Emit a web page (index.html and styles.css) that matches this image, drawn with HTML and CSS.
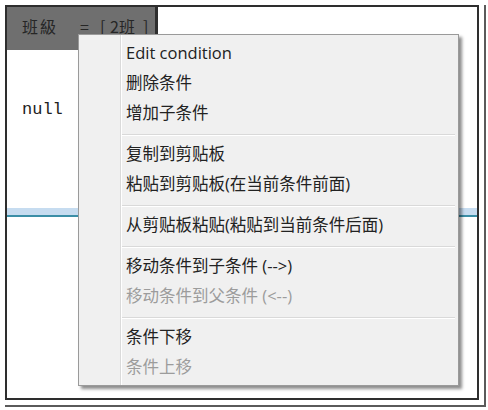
FILE: index.html
```html
<!DOCTYPE html>
<html>

<head>
    <link rel="stylesheet" href="styles.css">
</head>

<body>
    <div class="photo">
        <div class="frame">
            <div class="head">
                <span class="fld">班級</span>
                <span class="op">=</span>
                <span class="br">[</span>
                <span class="val">2班</span>
                <span class="br">]</span>
            </div>
            <div class="null">null</div>
            <div class="band"></div>

            <div class="menu">
                <div class="item">Edit condition</div>
                <div class="item">删除条件</div>
                <div class="item">增加子条件</div>
                <div class="sep"></div>
                <div class="item">复制到剪贴板</div>
                <div class="item">粘贴到剪贴板(在当前条件前面)</div>
                <div class="sep"></div>
                <div class="item">从剪贴板粘贴(粘贴到当前条件后面)</div>
                <div class="sep"></div>
                <div class="item">移动条件到子条件 (--&gt;)</div>
                <div class="item off">移动条件到父条件 (&lt;--)</div>
                <div class="sep"></div>
                <div class="item">条件下移</div>
                <div class="item off">条件上移</div>
            </div>
        </div>
    </div>
</body>

</html>
```

FILE: styles.css
```css
* {
    margin: 0;
    padding: 0;
    box-sizing: border-box;
}

body {
    background-color: #fff;
    font-family: "Open Sans", "Noto Sans CJK SC", sans-serif;
}

.photo {
    width: 481px;
    margin: 5px 0 0 5px;
    padding: 0 5px 5px 0;
    border-right: 2px solid #5a5a5a;
    border-bottom: 2px solid #5a5a5a;
}

.frame {
    position: relative;
    width: 474px;
    height: 395px;
    border: 2px solid #2e2e2e;
    background-color: #fff;
}

.head {
    display: flex;
    align-items: center;
    width: 151px;
    height: 43px;
    padding: 0 0 6px 15px;
    background-color: #6f6f6f;
    border-right: 3px solid #2e2e2e;
    color: #262626;
    font-family: "Noto Sans CJK SC", sans-serif;
    font-size: 16px;
    white-space: nowrap;
}

.head span {
    flex-shrink: 0;
}

.head .fld {
    width: 58px;
    letter-spacing: 2px;
}

.head .op {
    width: 20px;
}

.head .br {
    width: 10px;
}

.head .val {
    width: 33px;
}

.null {
    margin-top: 50px;
    padding-left: 15px;
    line-height: 20px;
    font-family: "Liberation Mono", monospace;
    font-size: 17px;
    color: #222;
}

.band {
    margin-top: 88px;
    height: 9px;
    background-color: #c6dcf0;
    border-bottom: 2px solid #3b8ea6;
}

.menu {
    position: absolute;
    left: 71px;
    top: 27px;
    width: 381px;
    height: 352px;
    padding: 3px 0 5px;
    border: 1px solid #9a9a9a;
    background: linear-gradient(to right, transparent 41px, #dadada 41px, #dadada 42px, #fff 42px, #fff 43px, transparent 43px), #f0f0f0;
    box-shadow: 3px 3px 3px rgba(0, 0, 0, 0.45);
}

.item {
    height: 30px;
    line-height: 30px;
    padding-left: 47px;
    font-size: 16.5px;
    color: #222;
    white-space: nowrap;
}

.item.off {
    color: #9c9c9c;
}

.sep {
    height: 2px;
    margin: 6px 3px 3px 43px;
    border-top: 1px solid #d9d9d9;
    border-bottom: 1px solid #fff;
}
```
